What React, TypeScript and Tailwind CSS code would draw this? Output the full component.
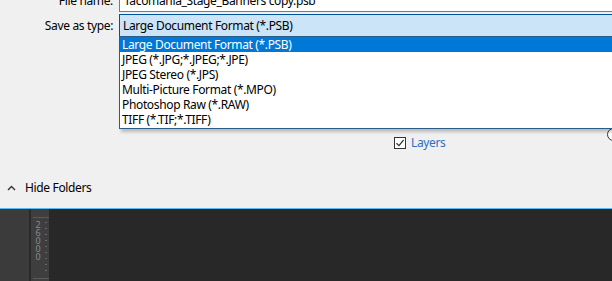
const fileTypes = [
  'Large Document Format (*.PSB)',
  'JPEG (*.JPG;*.JPEG;*.JPE)',
  'JPEG Stereo (*.JPS)',
  'Multi-Picture Format (*.MPO)',
  'Photoshop Raw (*.RAW)',
  'TIFF (*.TIF;*.TIFF)',
];

const SaveDialog = () => {
  return (
    <div className="relative h-[208px] bg-[#f0f0f0] text-[12px] tracking-[-0.35px] text-black">
      {/* file name row */}
      <div className="flex items-center -mt-[11px] h-[23px]">
        <div className="w-[114px] pr-[1px] text-right">File name:</div>
        <div className="ml-[5px] flex-1 h-[23px] border border-[#7a7a7a] border-r-0 bg-white pl-[4px] leading-[21px] whitespace-nowrap">
          Tacomania_Stage_Banners copy.psb
        </div>
      </div>

      {/* save as type row */}
      <div className="flex items-center mt-[2px] h-[23px]">
        <div className="w-[114px] pr-[1px] text-right">Save as type:</div>
        <div className="ml-[5px] flex-1 h-[23px] border border-[#005499] border-r-0 bg-[#cce4f7] pl-[3px] leading-[21px] whitespace-nowrap">
          Large Document Format (*.PSB)
        </div>
      </div>

      {/* options */}
      <div className="flex justify-between mt-[90px] h-[24px]">
        <div className="flex items-center pl-[394px] pt-[8px] gap-[5px]">
          <span className="flex items-center justify-center w-[12px] h-[12px] border border-[#333] bg-white">
            <svg width="10" height="10" viewBox="0 0 10 10">
              <path d="M1.5 5.2 L4 7.6 L8.6 2" fill="none" stroke="#333" strokeWidth="1.2" />
            </svg>
          </span>
          <span className="text-[#2f6fc0]">Layers</span>
        </div>
        <span className="-mr-[8px] mt-[1px] w-[13px] h-[13px] rounded-full border border-[#333] bg-white" />
      </div>

      {/* hide folders */}
      <div className="flex items-center gap-[9px] mt-[28px] pl-[7px]">
        <svg width="9" height="6" viewBox="0 0 9 6">
          <path d="M1 5 L4.5 1.5 L8 5" fill="none" stroke="#333" strokeWidth="1.4" />
        </svg>
        <span>Hide Folders</span>
      </div>

      {/* dropdown list overlay */}
      <div className="absolute left-[119px] top-[36px] w-[500px] h-[93px] border border-[#2c5d87] bg-white shadow-[2px_3px_3px_rgba(0,0,0,0.22)]">
        {fileTypes.map((type, i) => (
          <div
            key={type}
            className={
              i === 0
                ? 'h-[15px] pl-[2px] leading-[15px] bg-[#0078d7] text-white whitespace-nowrap'
                : 'h-[15px] pl-[2px] leading-[15px] whitespace-nowrap'
            }
          >
            {type}
          </div>
        ))}
      </div>
    </div>
  );
};

const Workspace = () => {
  return (
    <div className="flex flex-1 border-t border-[#5ab8ef] bg-[#282828]">
      <div className="w-[29px] bg-[#3b3b3b]" />
      <div className="w-[2px] bg-[#2a2a2a]" />
      <div className="flex flex-col w-[18px] bg-[#3e3e3e]">
        <div className="mt-[8px] ml-[2px] h-px bg-[#5a5a5a]" />
        <div className="flex">
          <div className="flex flex-col items-center w-[14px] pt-[3px] text-[9px] leading-[8px] text-[#8a8a8a]">
            <span>2</span>
            <span>6</span>
            <span>0</span>
            <span>0</span>
            <span>0</span>
          </div>
          <div className="flex flex-col gap-[5px] pt-[4px]">
            {[0, 1, 2, 3, 4, 5, 6, 7, 8].map((n) => (
              <div key={n} className="w-[2px] h-px bg-[#6a6a6a]" />
            ))}
          </div>
        </div>
        <div className="mt-auto mb-[2px] ml-[2px] h-px bg-[#5a5a5a]" />
      </div>
      <div className="flex-1" />
    </div>
  );
};

export default function App() {
  return (
    <div
      className="flex flex-col w-[612px] h-[281px] overflow-hidden bg-[#282828]"
      style={{ fontFamily: '"Noto Sans", "Open Sans", sans-serif' }}
    >
      <SaveDialog />
      <Workspace />
    </div>
  );
}
